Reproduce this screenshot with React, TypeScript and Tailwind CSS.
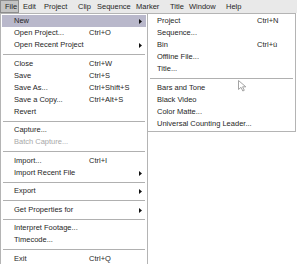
import React from "react";

type Item =
  | { sep: true; h?: number }
  | { label: string; shortcut?: string; sub?: boolean; disabled?: boolean; active?: boolean };

const menubar = [
  { label: "File", w: "w-[19px]" },
  { label: "Edit", w: "w-[21px]" },
  { label: "Project", w: "w-[34px]" },
  { label: "Clip", w: "w-[19px]" },
  { label: "Sequence", w: "w-[39px]" },
  { label: "Marker", w: "w-[34px]" },
  { label: "Title", w: "w-[19px]" },
  { label: "Window", w: "w-[37px]" },
  { label: "Help", w: "w-[24px]" },
];

const fileMenu: Item[] = [
  { label: "New", sub: true, active: true },
  { label: "Open Project...", shortcut: "Ctrl+O" },
  { label: "Open Recent Project", sub: true },
  { sep: true, h: 7 },
  { label: "Close", shortcut: "Ctrl+W" },
  { label: "Save", shortcut: "Ctrl+S" },
  { label: "Save As...", shortcut: "Ctrl+Shift+S" },
  { label: "Save a Copy...", shortcut: "Ctrl+Alt+S" },
  { label: "Revert" },
  { sep: true, h: 6 },
  { label: "Capture..." },
  { label: "Batch Capture...", disabled: true },
  { sep: true, h: 7 },
  { label: "Import...", shortcut: "Ctrl+I" },
  { label: "Import Recent File", sub: true },
  { sep: true, h: 6 },
  { label: "Export", sub: true },
  { sep: true, h: 7 },
  { label: "Get Properties for", sub: true },
  { sep: true, h: 6 },
  { label: "Interpret Footage..." },
  { label: "Timecode..." },
  { sep: true, h: 7 },
  { label: "Exit", shortcut: "Ctrl+Q" },
];

const newMenu: Item[] = [
  { label: "Project", shortcut: "Ctrl+N" },
  { label: "Sequence..." },
  { label: "Bin", shortcut: "Ctrl+ù" },
  { label: "Offline File..." },
  { label: "Title..." },
  { sep: true, h: 7 },
  { label: "Bars and Tone" },
  { label: "Black Video" },
  { label: "Color Matte..." },
  { label: "Universal Counting Leader..." },
];

const Arrow = () => (
  <svg width="3" height="5" viewBox="0 0 3 5" className="block">
    <path d="M0 0 L3 2.5 L0 5 Z" fill="#111" />
  </svg>
);

const MenuRows = ({ items, labelW, padL }: { items: Item[]; labelW: string; padL: string }) => (
  <>
    {items.map((it, i) =>
      "sep" in it ? (
        <div key={i} className={`flex items-center px-[1px] ${it.h === 7 ? "h-[7px]" : "h-[6px]"}`}>
          <div className="h-px w-full bg-[#b0b0b0]" />
        </div>
      ) : (
        <div
          key={i}
          className={`flex h-[12px] items-center ${padL} pr-[4px] ${it.active ? "bg-[#b9b8cb]" : ""} ${
            it.disabled ? "text-[#a8a8a8]" : "text-[#262626]"
          }`}
        >
          <span className={`${labelW} shrink-0 whitespace-nowrap`}>{it.label}</span>
          <span className="flex-1 whitespace-nowrap">{it.shortcut}</span>
          {it.sub && <Arrow />}
        </div>
      )
    )}
  </>
);

export default function App() {
  return (
    <div
      className="relative h-[264px] w-[297px] overflow-hidden bg-white text-[7.5px] leading-none"
      style={{ fontFamily: '"Liberation Sans", Arial, sans-serif' }}
    >
      {/* menu bar */}
      <div className="flex h-[13px] items-center bg-[#e9e9e9]">
        {menubar.map((m, i) => (
          <div
            key={m.label}
            className={`${m.w} flex h-full shrink-0 items-center pl-[4px] text-[#262626] ${
              i === 0 ? "border border-[#8d8d8d] bg-[#c4c4c4] pl-[3px]" : ""
            }`}
          >
            {m.label}
          </div>
        ))}
      </div>

      <div className="flex items-start">
        {/* File menu */}
        <div className="w-[148px] shrink-0 border-x border-t border-[#b4b4b4] bg-white px-px pt-px">
          <MenuRows items={fileMenu} labelW="w-[75px]" padL="pl-[12px]" />
        </div>

        {/* New submenu */}
        <div className="w-[148px] shrink-0 border border-l-0 border-[#b4b4b4] bg-white p-px">
          <MenuRows items={newMenu} labelW="w-[100px]" padL="pl-[8px]" />
        </div>
      </div>

      {/* mouse pointer */}
      <svg
        className="absolute left-[238px] top-[80px]"
        width="10"
        height="12"
        viewBox="0 0 10 12"
      >
        <path
          d="M0.5 0.5 L0.5 9.5 L3 7.3 L4.8 11 L6.3 10.3 L4.6 6.8 L7.8 6.8 Z"
          fill="#fff"
          stroke="#9a9a9a"
          strokeWidth="0.9"
        />
      </svg>
    </div>
  );
}
